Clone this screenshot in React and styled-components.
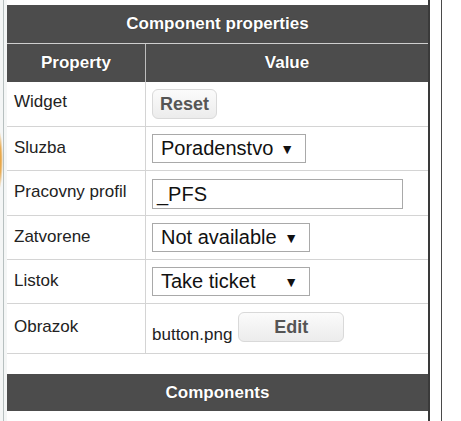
import styled, { createGlobalStyle } from "styled-components";

const GlobalStyle = createGlobalStyle`
  html, body {
    margin: 0;
    padding: 0;
    background: #ffffff;
  }
  body {
    font-family: "Liberation Sans", Arial, sans-serif;
    color: #222;
  }
`;

const Frame = styled.div`
  width: 461px;
  height: 421px;
  display: flex;
  overflow: hidden;
`;

// strip of the page behind the panel, with the edge of an orange shape
const Gutter = styled.div`
  width: 7px;
  flex-shrink: 0;
  display: flex;
  background:
    radial-gradient(ellipse 4px 30px at -1px 160px, #e39a2c 0, #e9ad55 55%, transparent 100%),
    #f4f6f6;

  &::after {
    content: "";
    width: 1px;
    margin-left: 3px;
    background: #b7c0c0;
  }
`;

const Panel = styled.div`
  width: 421px;
  flex-shrink: 0;
  padding-top: 5px;
  border-right: 2px solid #3a3a3a;
  display: flex;
  flex-direction: column;
`;

const OuterLine = styled.div`
  width: 1px;
  margin-left: 11px;
  background: #4a4a4a;
`;

const HeaderBar = styled.div`
  height: ${({ $h }) => $h}px;
  display: flex;
  align-items: center;
  justify-content: center;
  background: #4c4c4c;
  color: #fff;
  font-weight: bold;
  font-size: 17px;
  text-shadow: 0 0 1px rgba(0, 0, 0, 0.5);
  border-bottom: ${({ $sep }) => ($sep ? "1px solid #cfcfcf" : "none")};
  margin-top: ${({ $mt }) => $mt || 0}px;
`;

const HeadRow = styled.div`
  height: 38px;
  display: grid;
  grid-template-columns: 139px 1fr;
  background: #4c4c4c;
  color: #fff;
  font-weight: bold;
  font-size: 17px;
  text-shadow: 0 0 1px rgba(0, 0, 0, 0.5);
`;

const HeadCell = styled.div`
  display: flex;
  align-items: center;
  justify-content: center;
  border-right: ${({ $divider }) => ($divider ? "1px solid #bdbdbd" : "none")};
`;

const Row = styled.div`
  height: ${({ $h }) => $h}px;
  box-sizing: border-box;
  display: grid;
  grid-template-columns: 139px 1fr;
  border-bottom: 1px solid #d4d4d4;
`;

const Label = styled.div`
  display: flex;
  align-items: center;
  padding-left: 7px;
  padding-bottom: ${({ $lift }) => $lift || 0}px;
  border-right: 1px solid #d4d4d4;
  font-size: 17px;
  color: #222;
`;

const Value = styled.div`
  display: flex;
  align-items: center;
  gap: 6px;
  padding-left: 6px;
  padding-top: ${({ $drop }) => $drop || 0}px;
`;

const Button = styled.button`
  width: ${({ $w }) => $w}px;
  height: 30px;
  padding: 0;
  border: 1px solid #d9d9d9;
  border-radius: 6px;
  background: linear-gradient(#fbfbfb, #ececec);
  color: #555;
  font-family: "Liberation Sans", Arial, sans-serif;
  font-weight: bold;
  font-size: 18px;
  align-self: ${({ $top }) => ($top ? "flex-start" : "center")};
  margin-top: ${({ $top }) => $top || 0}px;
`;

const SelectBox = styled.div`
  width: ${({ $w }) => $w}px;
  height: 29px;
  box-sizing: border-box;
  display: flex;
  align-items: center;
  justify-content: space-between;
  padding: 0 11px 0 8px;
  border: 1px solid #a9a9a9;
  font-size: 20px;
  color: #111;
`;

const Arrow = styled.span`
  font-size: 14px;
  color: #111;
`;

const TextInput = styled.div`
  width: 251px;
  height: 30px;
  box-sizing: border-box;
  display: flex;
  align-items: center;
  padding-left: 4px;
  border: 1px solid #a9a9a9;
  font-size: 20px;
  color: #111;
`;

const FileName = styled.span`
  font-size: 17px;
  color: #222;
  padding-top: 12px;
`;

function Select({ value, width }) {
  return (
    <SelectBox $w={width}>
      <span>{value}</span>
      <Arrow>▼</Arrow>
    </SelectBox>
  );
}

export default function App() {
  return (
    <Frame>
      <GlobalStyle />
      <Gutter />
      <Panel>
        <HeaderBar $h={38} $sep>
          Component properties
        </HeaderBar>
        <HeadRow>
          <HeadCell $divider>Property</HeadCell>
          <HeadCell>Value</HeadCell>
        </HeadRow>

        <Row $h={45}>
          <Label $lift={4}>Widget</Label>
          <Value>
            <Button $w={65}>Reset</Button>
          </Value>
        </Row>
        <Row $h={44}>
          <Label $lift={2}>Sluzba</Label>
          <Value>
            <Select value="Poradenstvo" width={154} />
          </Value>
        </Row>
        <Row $h={45}>
          <Label $lift={2}>Pracovny profil</Label>
          <Value $drop={2}>
            <TextInput>_PFS</TextInput>
          </Value>
        </Row>
        <Row $h={44}>
          <Label $lift={2}>Zatvorene</Label>
          <Value>
            <Select value="Not available" width={158} />
          </Value>
        </Row>
        <Row $h={44}>
          <Label $lift={2}>Listok</Label>
          <Value>
            <Select value="Take ticket" width={158} />
          </Value>
        </Row>
        <Row $h={50}>
          <Label $lift={4}>Obrazok</Label>
          <Value>
            <FileName>button.png</FileName>
            <Button $w={106} $top={8}>
              Edit
            </Button>
          </Value>
        </Row>

        <HeaderBar $h={37} $mt={20}>
          Components
        </HeaderBar>
      </Panel>
      <OuterLine />
    </Frame>
  );
}
